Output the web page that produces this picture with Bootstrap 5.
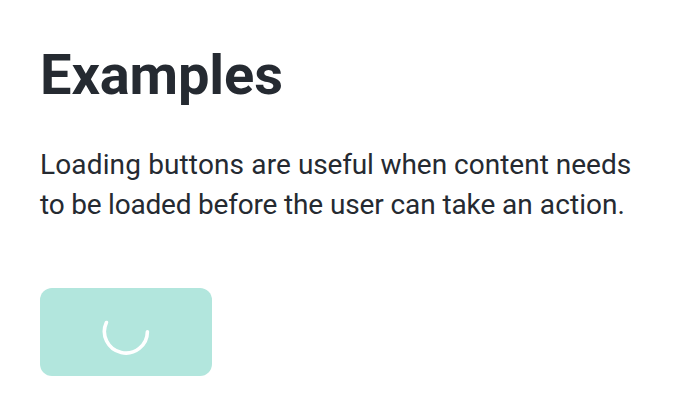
<!DOCTYPE html>
<html lang="en">
<head>
<meta charset="utf-8">
<meta name="viewport" content="width=device-width, initial-scale=1">
<title>Examples</title>
<link href="https://cdn.jsdelivr.net/npm/bootstrap@5.3.0/dist/css/bootstrap.min.css" rel="stylesheet">
<style>
body { font-family: Roboto, sans-serif; color: #252a31; background: #fff; }
main { padding: 41px 40px 0; }
.title { font-size: 56px; line-height: 68px; font-weight: 700; letter-spacing: -.12px; margin: 0 0 36px; }
.intro { font-size: 28px; line-height: 40px; margin: 0 0 63px; white-space: nowrap; }
.track-wide { letter-spacing: .14px; }
.track-tight { letter-spacing: -.2px; }
.track-snug { letter-spacing: -.11px; }
.track-open { letter-spacing: .08px; }
.btn-loading { width: 172px; height: 88px; border: 0; border-radius: 12px; }
.btn-loading, .btn-loading:disabled { background: #b2e6dd; opacity: 1; }
</style>
</head>
<body>
<main>
  <h1 class="title">Examples</h1>
  <p class="intro"><span class="track-wide">Loading buttons are </span><span class="track-tight">useful </span>when content needs<br><span class="track-tight">to be loaded before </span><span class="track-snug">the user can take </span><span class="track-open">an action.</span></p>
  <button class="btn btn-loading d-flex align-items-center justify-content-center p-0" type="button" disabled aria-label="Loading">
    <svg width="48" height="48" viewBox="0 0 48 48" fill="none" stroke="#fff" stroke-width="3.6" stroke-linecap="round"><path d="M4.4 14.5A21.5 21.5 0 1 0 45.4 23.7"/></svg>
  </button>
</main>
<script src="https://cdn.jsdelivr.net/npm/bootstrap@5.3.0/dist/js/bootstrap.bundle.min.js"></script>
</body>
</html>
